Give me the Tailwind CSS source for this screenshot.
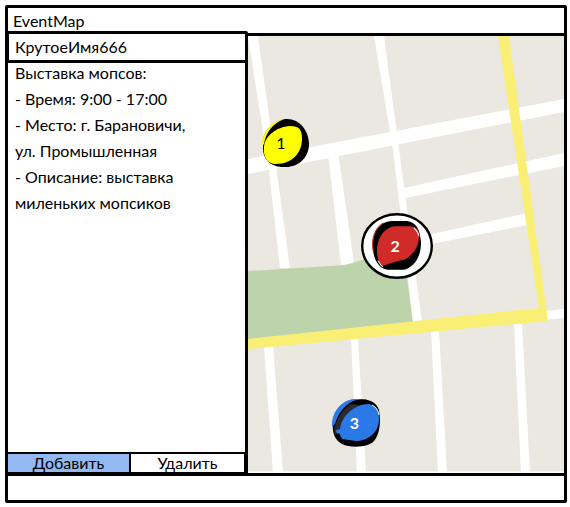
<!DOCTYPE html>
<html lang="ru">
<head>
<meta charset="utf-8">
<meta name="viewport" content="width=device-width, initial-scale=1">
<title>EventMap</title>
<script src="https://cdn.jsdelivr.net/npm/@tailwindcss/browser@4"></script>
</head>
<body class="flex h-screen flex-col bg-white pt-[5px] pr-[3px] pb-1 pl-[5px] font-['Lato','Open_Sans',sans-serif] text-base text-black">
  <div class="flex min-h-0 flex-1 flex-col rounded-xs border-3 border-black">
    <header class="flex h-[25px] shrink-0 items-center px-[5px]">
      <h1>EventMap</h1>
    </header>
    <main class="flex min-h-0 flex-1">
      <aside class="-mt-[2px] -mb-[2px] -ml-[2px] flex w-[242px] shrink-0 flex-col">
        <h2 class="flex h-8 shrink-0 items-center rounded-xs border-3 border-black bg-white px-[6px] pb-px">КрутоеИмя666</h2>
        <div class="-mt-[3px] flex min-h-0 flex-1 flex-col border-r-3 border-black pl-[9px] leading-[26px]">
          <p>Выставка мопсов:</p>
          <p>- Время: 9:00 - 17:00</p>
          <p>- Место: г. Барановичи,</p>
          <p>ул. Промышленная</p>
          <p>- Описание: выставка</p>
          <p>миленьких мопсиков</p>
        </div>
        <div class="flex h-[23px] shrink-0 border-2 border-r-4 border-b-3 border-black leading-4">
          <button type="button" class="w-[123px] border-r-2 border-black bg-[#93b9f2]">Добавить</button>
          <button type="button" class="flex-1 bg-white">Удалить</button>
        </div>
      </aside>
      <section aria-label="Карта" class="relative min-w-0 flex-1 border-t-3 border-black">
        <svg class="absolute inset-0 size-full" viewBox="248 36 316 437" preserveAspectRatio="none" aria-hidden="true">
          <path fill="#ebe8e1" d="M248 36h316v437h-316z"/>
          <g fill="#fff">
            <path d="M248 36h10L290 268h-10L269 171Z"/>
            <path d="M374 36h10L422 322h-9L393 150Z"/>
            <path d="M248 159L564 99V112L248 174Z"/>
            <path d="M328 154l10-2 16 111-13 2Z"/>
            <path d="M404 188L564 153V166L405 198Z"/>
            <path d="M432 234l95-21v12l-95 19Z"/>
            <path d="M545 311l19-2v9l-19 2Z"/>
            <path d="M264 346h9l10 127h-10ZM351 337h7l8 136h-9ZM431 330h8l8 143h-9ZM514 324h8l8 149h-9Z"/>
            <path d="M248 471.500h316V473h-316z"/>
          </g>
          <path fill="#bcd3ac" d="M248 271L346 265 380 254 405 262 413 324 248 341Z"/>
          <path fill="#faef75" d="M248 339L539 308 498 36h11L548 321 248 349Z"/>
        </svg>

        <button type="button" class="absolute top-[24.400%] left-[11.700%] grid size-12 -translate-1/2 place-items-center">
          <svg class="col-start-1 row-start-1 size-full" viewBox="0 0 48 48" aria-hidden="true">
            <path fill="#ff0" d="M1 25C0 14 13 1 24 0L30 5 8 38Z"/>
            <path fill="#000" d="M2 27C0 12 14 0 26 0C39 0 48 12 48 25C48 39 37 48 25 48C11 49 1 41 2 27Z"/>
            <path fill="#ff0" d="M1 27C0 14 12 1 23 0Q6 7 3 25Z"/>
            <path fill="#ff0" d="M3 28C4 17 15 8 29 7C38 7 41 10 41 20C41 34 31 45 15 45C6 45 2 38 3 28Z"/>
          </svg>
          <span class="relative col-start-1 row-start-1 pr-2">1</span>
        </button>

        <button type="button" class="absolute top-[48%] left-[47.200%] grid h-[66px] w-[72px] -translate-1/2 place-items-center text-white">
          <svg class="col-start-1 row-start-1 size-full" viewBox="0 0 72 65" preserveAspectRatio="none" aria-hidden="true">
            <ellipse cx="36" cy="32.500" rx="34.800" ry="31.300" fill="#fff" stroke="#000" stroke-width="2.400"/>
            <path fill="#000" d="M12 33C11 18 19 9 30 8H46C55 9 59 16 60 29C60 44 53 53 43 56H27C18 55 12 46 12 33Z"/>
            <path fill="none" stroke="#d02b28" d="M12 37C10 25 14 15 22 10"/>
            <path fill="#d02b28" d="M16 37C16 24 24 14 34 13H50Q58 13 58 23C58 35 50 43 43 46Q36 47 22 52Q16 49 16 37Z"/>
            <path fill="none" stroke="#fff" d="M53 15Q57 18 58 23M17 47Q19 51 22 53"/>
          </svg>
          <span class="relative col-start-1 row-start-1 pr-1 font-bold">2</span>
        </button>

        <button type="button" class="absolute top-[88.500%] left-[34.300%] grid size-12 -translate-1/2 place-items-center text-white">
          <svg class="col-start-1 row-start-1 size-full" viewBox="0 0 48 48" aria-hidden="true">
            <path fill="#2b79e7" d="M1 26C0 12 10 1 23 0H35L8 38Z"/>
            <path fill="#000" d="M21 2C31-1 43 0 47 11C49 22 48 35 42 42C36 49 18 49 10 45C2 41 0 32 1 24Q5 7 21 2Z"/>
            <path fill="#2b79e7" d="M0 28C-1 12 11 0 25 0Q8 7 3 25Z"/>
            <path fill="#292b31" d="M2 31C5 19 12 8 20 5L28 6C18 12 11 23 6 33L3 36Z"/>
            <path fill="#2b79e7" d="M8 30C10 16 23 5 37 5Q47 7 47 20C47 35 34 42 24 42L10 40 7 34 5 35 4 31Z"/>
            <path fill="none" stroke="#fff" d="M40 6Q46 9 47 16"/>
          </svg>
          <span class="relative col-start-1 row-start-1 pr-1 font-bold">3</span>
        </button>
      </section>
    </main>
    <footer class="h-[27px] shrink-0 border-t-3 border-black"></footer>
  </div>
</body>
</html>
